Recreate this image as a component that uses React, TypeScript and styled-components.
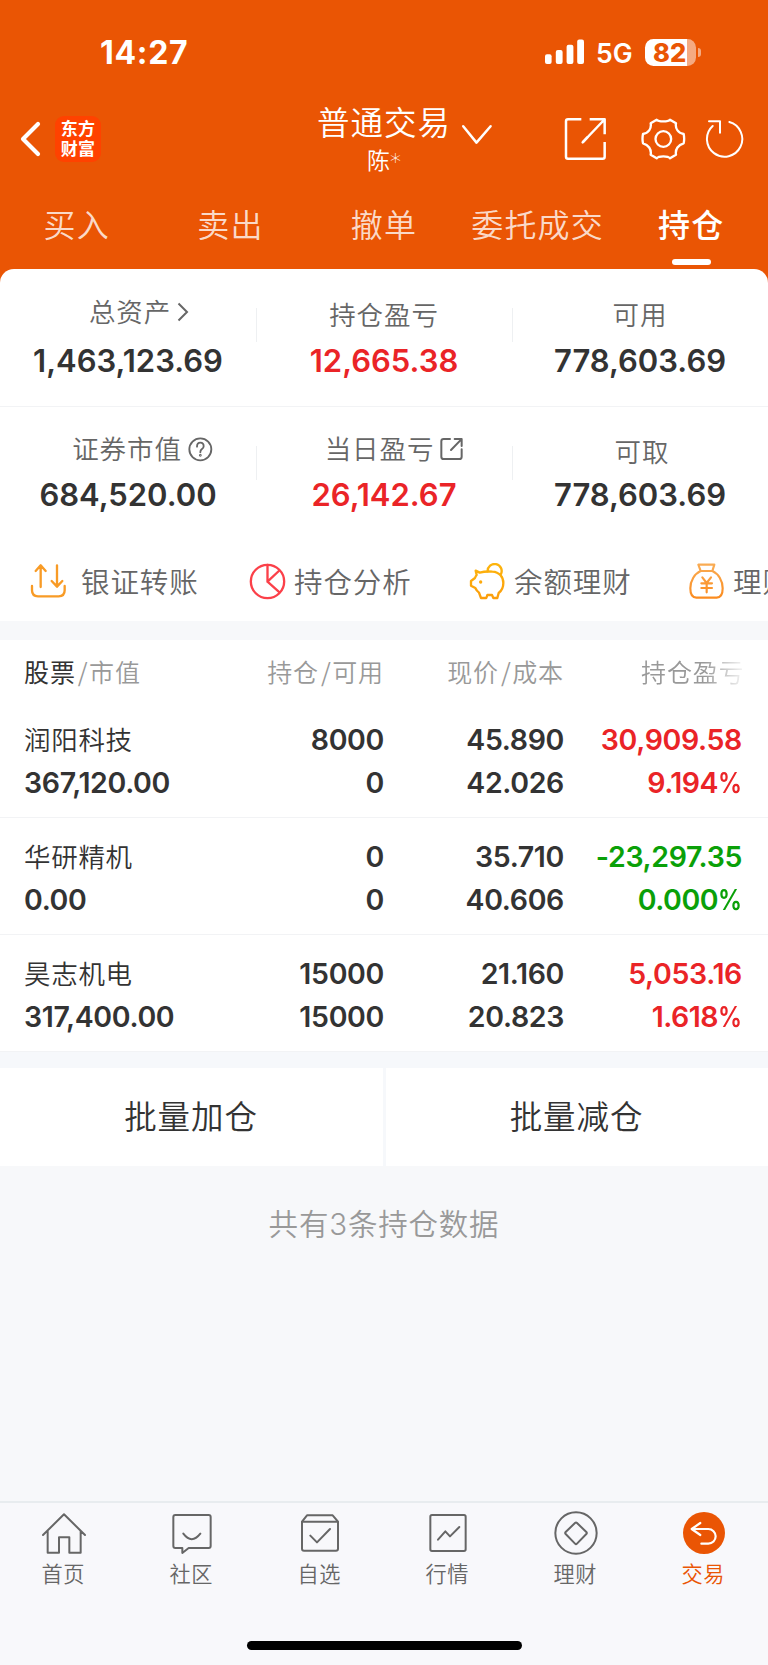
import React from 'react';
import styled, { createGlobalStyle } from 'styled-components';

const orange = '#ea5504';
const red = '#ea2427';
const green = '#0aa008';
const ink = '#333333';
const gray = '#666666';
const pale = '#f6f8fb';
const numeric = `Inter, 'Noto Sans CJK SC', sans-serif`;
const chinese = `'Noto Sans CJK SC', sans-serif`;

const GlobalStyle = createGlobalStyle`
  * { box-sizing: border-box; }
  body {
    margin: 0;
    background: #f7f8fa;
    color: ${ink};
    font-family: ${chinese};
    font-weight: 350;
    -webkit-font-smoothing: antialiased;
  }
  svg { display: block; flex: none; }
`;

const Screen = styled.div`
  width: 768px;
  height: 1665px;
  display: flex;
  flex-direction: column;
  overflow: hidden;
`;

const Header = styled.header`
  height: 290px;
  flex: none;
  background: ${orange};
  color: #fff;
`;

const StatusBar = styled.div`
  height: 104px;
  padding: 0 67px 0 100px;
  display: flex;
  align-items: center;
  font-family: ${numeric};
`;

const Clock = styled.div`
  font-size: 32px;
  font-weight: 700;
  letter-spacing: 0.7px;
  flex: 1;
`;

const Network = styled.div`
  font-size: 26.5px;
  font-weight: 600;
  letter-spacing: 0;
  width: 36px;
  margin: 1px 13px 0 12px;
`;

const Battery = styled.div`
  width: 51px;
  height: 27px;
  border-radius: 8.5px;
  background: linear-gradient(to right, #fff 42px, rgba(255, 255, 255, 0.5) 42px);
  color: ${orange};
  font-size: 25.5px;
  font-weight: 800;
  line-height: 27px;
  padding-left: 8px;
  letter-spacing: 0;
`;

const BatteryNub = styled.div`
  width: 3px;
  height: 9px;
  margin-left: 2px;
  border-radius: 0 4px 4px 0;
  background: rgba(255, 255, 255, 0.5);
`;

const NavBar = styled.div`
  height: 76px;
  display: grid;
  grid-template-columns: 318px 132px 1fr;
`;

const NavLeft = styled.div`
  display: flex;
  align-items: center;
  padding: 0 0 8px 20px;
  gap: 14px;
`;

const Logo = styled.div`
  width: 46px;
  height: 46px;
  border-radius: 9px;
  background: #ff4200;
  font-size: 17px;
  font-weight: 700;
  line-height: 19.5px;
  letter-spacing: 0.3px;
  text-align: center;
  padding-top: 2.5px;
`;

const NavTitle = styled.div`
  display: flex;
  flex-direction: column;
  align-items: center;
  white-space: nowrap;
`;

const Title = styled.div`
  font-size: 32.5px;
  letter-spacing: 1px;
  line-height: 38px;
  margin-top: -2px;
`;

const Account = styled.div`
  display: flex;
  font-size: 23px;
  line-height: 38px;
`;

const Mask = styled.span`
  font-family: 'DejaVu Sans', sans-serif;
  font-size: 22px;
  padding-top: 3px;
`;

const NavRight = styled.div`
  display: flex;
  align-items: center;
  padding: 0 0 8px 11px;
`;

const Tabs = styled.nav`
  display: grid;
  grid-template-columns: repeat(5, 1fr);
  height: 89px;
`;

const Tab = styled.div<{ $active?: boolean }>`
  display: flex;
  flex-direction: column;
  align-items: center;
  padding-top: 20px;
  font-size: 32px;
  line-height: 46px;
  letter-spacing: 1.2px;
  white-space: nowrap;
  font-weight: ${p => (p.$active ? 500 : 350)};
  color: ${p => (p.$active ? '#fff' : 'rgba(255,255,255,0.8)')};
  &::after {
    content: '';
    display: ${p => (p.$active ? 'block' : 'none')};
    width: 39px;
    height: 6px;
    margin-top: 13px;
    border-radius: 3px;
    background: #fff;
  }
`;

const Summary = styled.section`
  flex: none;
  height: 352px;
  margin-top: -21px;
  border-radius: 14px 14px 0 0;
  background: #fff;
`;

const SummaryRow = styled.div<{ $first?: boolean }>`
  height: ${p => (p.$first ? 138 : 134)}px;
  padding-top: ${p => (p.$first ? 22 : 21)}px;
  display: grid;
  grid-template-columns: repeat(3, 1fr);
  border-bottom: ${p => (p.$first ? '1px solid #f2f3f5' : 'none')};
  background:
    linear-gradient(#eef0f2, #eef0f2) 256px 38.5px / 1px 34px no-repeat,
    linear-gradient(#eef0f2, #eef0f2) 512px 38.5px / 1px 34px no-repeat;
`;

const Metric = styled.div`
  display: flex;
  flex-direction: column;
  align-items: center;
`;

const MetricLabel = styled.div<{ $raised?: boolean; $shift?: number }>`
  display: flex;
  align-items: center;
  height: 42px;
  padding-top: ${p => (p.$raised ? 0 : 4)}px;
  padding-bottom: ${p => (p.$raised ? 2 : 0)}px;
  padding-left: ${p => p.$shift || 0}px;
  color: ${gray};
  font-size: 26.5px;
  letter-spacing: 0.9px;
  line-height: 38px;
  white-space: nowrap;
`;

const LabelIcon = styled.span`
  margin: 2px 0 0 6px;
`;

const MetricValue = styled.div<{ $color?: string; $top?: number }>`
  height: 50px;
  margin-top: ${p => p.$top || 0}px;
  line-height: 50px;
  font-family: ${numeric};
  font-size: 31px;
  font-weight: 600;
  color: ${p => p.$color || ink};
`;

const Shortcuts = styled.div`
  height: 80px;
  display: flex;
  overflow: hidden;
  padding-left: 30px;
`;

const Shortcut = styled.div<{ $gap: number; $width: number }>`
  flex: none;
  width: ${p => p.$width}px;
  height: 80px;
  display: flex;
  align-items: center;
  gap: ${p => p.$gap}px;
  font-size: 28.5px;
  letter-spacing: 0.9px;
  color: ${gray};
  white-space: nowrap;
  span { margin-top: -2px; }
`;

const Holdings = styled.section`
  flex: none;
  margin-top: 19px;
  background: #fff;
`;

const HoldingGrid = styled.div`
  display: grid;
  grid-template-columns: 200px 160px 180px 178px;
  padding-left: 24px;
`;

const HeadRow = styled(HoldingGrid)`
  height: 61px;
  align-items: center;
  font-size: 25px;
  letter-spacing: 0.9px;
  color: #999;
  white-space: nowrap;
`;

const HeadCell = styled.div<{ $align?: string }>`
  text-align: ${p => p.$align || 'right'};
  b { font-weight: 400; color: ${ink}; }
  i { font-style: normal; margin: 0 0.5px 0 2px; }
`;

const FadedHead = styled(HeadCell)`
  text-align: left;
  padding-left: 77px;
  mask-image: linear-gradient(to right, #000 140px, transparent 184px);
`;

const HoldingRow = styled(HoldingGrid)`
  height: 117px;
  padding-top: 16.5px;
  border-bottom: 1px solid #f2f3f5;
`;

const Cell = styled.div<{ $align?: string; $color?: string }>`
  text-align: ${p => p.$align || 'right'};
  color: ${p => p.$color || ink};
  font-family: ${numeric};
  font-size: 28.5px;
  font-weight: 600;
  line-height: 43px;
  letter-spacing: -0.35px;
  white-space: nowrap;
`;

const Line = styled.div`
  height: 43px;
`;

const Percent = styled(Line)`
  letter-spacing: -0.5px;
  span {
    display: inline-block;
    width: 24px;
    transform: scaleX(0.84);
    transform-origin: left;
  }
`;

const StockName = styled(Line)`
  font-family: ${chinese};
  font-size: 26.5px;
  font-weight: 350;
  line-height: 41px;
  letter-spacing: 0.7px;
`;

const Actions = styled.div`
  flex: none;
  display: grid;
  grid-template-columns: 383px 1fr;
  gap: 3px;
  padding: 16px 0 0;
  background: ${pale};
`;

const ActionButton = styled.button`
  height: 98px;
  border: 0;
  padding: 0 1px 5px 0;
  background: #fff;
  color: ${ink};
  font: inherit;
  font-size: 32.5px;
  letter-spacing: 0.9px;
`;

const Footnote = styled.div`
  flex: 1;
  background: #f7f8fa;
  text-align: center;
  padding-top: 34.5px;
  font-family: ${numeric};
  font-size: 29.5px;
  line-height: 46px;
  letter-spacing: 0.8px;
  color: #999;
`;

const BottomBar = styled.nav`
  flex: none;
  height: 164px;
  background: #f8f8fb;
  border-top: 2px solid #e8ecef;
  display: flex;
  flex-direction: column;
  align-items: center;
`;

const BottomItems = styled.div`
  width: 768px;
  display: grid;
  grid-template-columns: repeat(6, 1fr);
`;

const BottomItem = styled.div<{ $active?: boolean }>`
  height: 138px;
  display: flex;
  flex-direction: column;
  align-items: center;
  padding-top: 8px;
  font-size: 21.2px;
  line-height: 32px;
  letter-spacing: 0.5px;
  color: ${p => (p.$active ? orange : gray)};
  svg { margin-bottom: 1.5px; }
  span { padding-right: 1.5px; }
`;

const HomeIndicator = styled.div`
  width: 275px;
  height: 9px;
  border-radius: 5px;
  background: #000;
`;

type IconProps = { box: string; w: number; h: number; color?: string; stroke?: number; children: React.ReactNode };
const Icon = ({ box, w, h, color = 'currentColor', stroke = 2, children }: IconProps) => (
  <svg width={w} height={h} viewBox={box} fill="none" stroke={color} strokeWidth={stroke} strokeLinecap="round" strokeLinejoin="round">
    {children}
  </svg>
);

const SignalBars = () => (
  <svg width="39" height="26" viewBox="0 0 39 26" fill="#fff">
    <rect x="0" y="15.2" width="6.6" height="9.8" rx="2" />
    <rect x="10.8" y="11" width="6.8" height="14" rx="2" />
    <rect x="21.6" y="5.8" width="6.8" height="19.2" rx="2" />
    <rect x="32.2" y="0.4" width="6.8" height="24.6" rx="2" />
  </svg>
);

const BackIcon = () => (
  <Icon box="0 0 21 36" w={21} h={36} stroke={4.2}><path d="M18 3 3 18l15 15" /></Icon>
);
const ChevronDown = () => (
  <Icon box="0 0 32 22" w={32} h={22} stroke={2.5}><path d="m2.2 2.2 13.3 16.4L29.600 2.2" /></Icon>
);
const ShareIcon = () => (
  <Icon box="540 350 129 132" w={43} h={44} stroke={7.5}>
    <path d="M592 357h-40q-6 0-6 6v106q0 6 6 6h104q6 0 6-6v-44M617 357h45v45M660 359l-63 66" strokeLinecap="butt" />
    <path d="m596 426 14-15" />
  </Icon>
);
const GearIcon = () => (
  <Icon box="15 18 135 132" w={45} h={44} stroke={7}>
    <circle cx="82" cy="84" r="23.500" />
    <path d="M62 26C68 33 96 33 102 26L120 37C117 53 127 67 143 69Q146 83 143 97C127 101 117 115 120 131L102 142C96 134 68 134 62 142L44 131C47 115 37 101 21 97Q18 83 21 69C37 67 47 53 44 37Z" />
  </Icon>
);
const RefreshIcon = () => (
  <Icon box="963 354 120 120" w={40} h={40} stroke={6}>
    <path d="M1036 363a53 53 0 1 1-50 12M975 361h33v34" />
  </Icon>
);

const TransferIcon = () => (
  <Icon box="90 70 111 111" w={37} h={37} color="#f89b26" stroke={7}>
    <path d="M96 139v13q0 18 18 18h62q18 0 18-18v-13M122 142V77l-15 17M122 77l15 17M171 77v64l-16-17M171 141l16-17" />
  </Icon>
);
const AnalysisIcon = () => (
  <Icon box="748 70 111 111" w={37} h={37} color="#fb4049" stroke={7}>
    <circle cx="803.500" cy="125.500" r="50" />
    <path d="M803.500 76v50l34-32M803.500 126l36 32" />
  </Icon>
);
const PiggyIcon = () => (
  <Icon box="254 70 111 111" w={37} h={37} color="url(#pig)" stroke={7}>
    <defs><linearGradient id="pig" gradientUnits="userSpaceOnUse" x1="300" y1="70" x2="300" y2="180"><stop stopColor="#fdb50c" /><stop offset="1" stopColor="#fb9d0c" /></linearGradient></defs>
    <path d="M274 93L286 99Q304 94 324 96C346 97 357 113 357 130C357 144 351 154 343 160L339 175H327L323 166H309L306 175H290L284 159Q277 154 273 145L260 138V124L272 115Q274 109 277 106Z" />
    <path d="M310 95a21 21 0 1 1 40 8" />
    <circle cx="289" cy="127" r="5" fill="#fda90c" stroke="none" />
  </Icon>
);
const MoneyBagIcon = () => (
  <Icon box="911 70 111 111" w={37} h={37} color="url(#bag)" stroke={6.500}>
    <defs><linearGradient id="bag" gradientUnits="userSpaceOnUse" x1="960" y1="70" x2="960" y2="180"><stop stopColor="#f9ad56" /><stop offset="1" stopColor="#fb8a1c" /></linearGradient></defs>
    <path d="M942 75h48l-6 19h-35Z M949 94c-18 8-31 29-31 52 0 17 6 28 18 28h61c12 0 18-11 18-28 0-23-13-44-31-52" />
    <path d="m954 113 13 17 13-17M967 130v28M951 131h32M951 145h32" />
  </Icon>
);

const HomeIcon = () => (
  <Icon box="127 62 132 132" w={44} h={44} stroke={6}>
    <path d="m130 134 63-62 63 62M144 123v64h34v-46h31v46h34v-64" />
  </Icon>
);
const CommunityIcon = () => (
  <Icon box="511 62 132 132" w={44} h={44} stroke={6}>
    <path d="M527 74h100q6 0 6 6v87q0 6-6 6h-60l-19 15v-15h-21q-6 0-6-6V80q0-6 6-6ZM551 130q25 33 51 0" />
  </Icon>
);
const WatchlistIcon = () => (
  <Icon box="894 62 132 132" w={44} h={44} stroke={6}>
    <path d="M906 94h108v81q0 6-6 6h-96q-6 0-6-6ZM906 94l15-19h77l16 19M931 136l20 20 39-40" />
  </Icon>
);
const MarketIcon = () => (
  <Icon box="126 62 132 132" w={44} h={44} stroke={6}>
    <rect x="139" y="74" width="106" height="108" rx="5" />
    <path d="m162 148 22-25 14 15 28-28" />
  </Icon>
);
const WealthIcon = () => (
  <Icon box="510 62 132 132" w={44} h={44} stroke={6}>
    <circle cx="576" cy="128" r="62" />
    <path d="M573 98q3-3 6 0l28 27q3 3 0 6l-28 29q-3 3-6 0l-28-29q-3-3 0-6Z" />
  </Icon>
);
const TradeIcon = () => (
  <Icon box="894 62 132 132" w={44} h={44} color="#fff" stroke={6.500}>
    <circle cx="960" cy="128" r="63" fill={orange} stroke="none" />
    <path d="m949 98-26 18 26 18M925 116h48a22 22 0 0 1 0 44h-21" />
  </Icon>
);

const ChevronRight = () => (
  <svg width="12" height="20" viewBox="0 0 12 20" fill="none" stroke={gray} strokeWidth="2"><path d="m1.500 1.500 8.500 8.500-8.500 8.500" /></svg>
);
const HelpIcon = () => (
  <Icon box="565 502 75 75" w={25} h={25} stroke={5.500}>
    <circle cx="602" cy="539" r="33" />
    <path d="M592 531q0-12 10-12t10 11q0 6-6 9-4 3-4 9" />
    <circle cx="602" cy="557" r="1.500" />
  </Icon>
);
const SmallShareIcon = () => (
  <Icon box="172 503 72 72" w={24} h={24} stroke={6}>
    <path d="M202 509h-19q-7 0-7 7v46q0 7 7 7h47q7 0 7-7v-22M216 509h21v21M236 510l-31 32" />
  </Icon>
);

const IconSlot = styled.span<{ $left: number }>`
  margin-left: ${p => p.$left}px;
`;

const ChevronSlot = styled.span`
  margin-bottom: 8px;
`;

const bottomItems = [
  { label: '首页', icon: <HomeIcon /> },
  { label: '社区', icon: <CommunityIcon /> },
  { label: '自选', icon: <WatchlistIcon /> },
  { label: '行情', icon: <MarketIcon /> },
  { label: '理财', icon: <WealthIcon /> },
  { label: '交易', icon: <TradeIcon />, active: true },
];

const holdings = [
  { name: '润阳科技', value: '367,120.00', qty: '8000', free: '0', price: '45.890', cost: '42.026', profit: '30,909.58', rate: '9.194', color: red },
  { name: '华研精机', value: '0.00', qty: '0', free: '0', price: '35.710', cost: '40.606', profit: '-23,297.35', rate: '0.000', color: green },
  { name: '昊志机电', value: '317,400.00', qty: '15000', free: '15000', price: '21.160', cost: '20.823', profit: '5,053.16', rate: '1.618', color: red },
];

export default function App() {
  return (
    <Screen>
      <GlobalStyle />
      <Header>
        <StatusBar>
          <Clock>14:27</Clock>
          <SignalBars />
          <Network>5G</Network>
          <Battery>82</Battery>
          <BatteryNub />
        </StatusBar>
        <NavBar>
          <NavLeft>
            <BackIcon />
            <Logo>东方<br />财富</Logo>
          </NavLeft>
          <NavTitle>
            <Title>普通交易</Title>
            <Account>陈<Mask>*</Mask></Account>
          </NavTitle>
          <NavRight>
            <ChevronSlot><ChevronDown /></ChevronSlot>
            <IconSlot $left={71}><ShareIcon /></IconSlot>
            <IconSlot $left={34}><GearIcon /></IconSlot>
            <IconSlot $left={19}><RefreshIcon /></IconSlot>
          </NavRight>
        </NavBar>
        <Tabs>
          <Tab>买入</Tab>
          <Tab>卖出</Tab>
          <Tab>撤单</Tab>
          <Tab>委托成交</Tab>
          <Tab $active>持仓</Tab>
        </Tabs>
      </Header>

      <Summary>
        <SummaryRow $first>
          <Metric>
            <MetricLabel $raised $shift={22}>总资产<LabelIcon><ChevronRight /></LabelIcon></MetricLabel>
            <MetricValue $top={3}>1,463,123.69</MetricValue>
          </Metric>
          <Metric>
            <MetricLabel>持仓盈亏</MetricLabel>
            <MetricValue $top={3} $color={red}>12,665.38</MetricValue>
          </Metric>
          <Metric>
            <MetricLabel>可用</MetricLabel>
            <MetricValue $top={3}>778,603.69</MetricValue>
          </Metric>
        </SummaryRow>
        <SummaryRow>
          <Metric>
            <MetricLabel $raised $shift={29}>证券市值<LabelIcon><HelpIcon /></LabelIcon></MetricLabel>
            <MetricValue>684,520.00</MetricValue>
          </Metric>
          <Metric>
            <MetricLabel $raised $shift={21}>当日盈亏<LabelIcon><SmallShareIcon /></LabelIcon></MetricLabel>
            <MetricValue $color={red}>26,142.67</MetricValue>
          </Metric>
          <Metric>
            <MetricLabel $shift={4}>可取</MetricLabel>
            <MetricValue>778,603.69</MetricValue>
          </Metric>
        </SummaryRow>
        <Shortcuts>
          <Shortcut $gap={14} $width={219}><TransferIcon /><span>银证转账</span></Shortcut>
          <Shortcut $gap={8} $width={220}><AnalysisIcon /><span>持仓分析</span></Shortcut>
          <Shortcut $gap={8} $width={219}><PiggyIcon /><span>余额理财</span></Shortcut>
          <Shortcut $gap={8} $width={219}><MoneyBagIcon /><span>理财</span></Shortcut>
        </Shortcuts>
      </Summary>

      <Holdings>
        <HeadRow>
          <HeadCell $align="left"><b>股票</b><i>/</i>市值</HeadCell>
          <HeadCell>持仓<i>/</i>可用</HeadCell>
          <HeadCell>现价<i>/</i>成本</HeadCell>
          <FadedHead>持仓盈亏</FadedHead>
        </HeadRow>
        {holdings.map(h => (
          <HoldingRow key={h.name}>
            <Cell $align="left"><StockName>{h.name}</StockName><Line>{h.value}</Line></Cell>
            <Cell><Line>{h.qty}</Line><Line>{h.free}</Line></Cell>
            <Cell><Line>{h.price}</Line><Line>{h.cost}</Line></Cell>
            <Cell $color={h.color}><Line>{h.profit}</Line><Percent>{h.rate}<span>%</span></Percent></Cell>
          </HoldingRow>
        ))}
      </Holdings>

      <Actions>
        <ActionButton>批量加仓</ActionButton>
        <ActionButton>批量减仓</ActionButton>
      </Actions>
      <Footnote>共有3条持仓数据</Footnote>

      <BottomBar>
        <BottomItems>
          {bottomItems.map(item => (
            <BottomItem key={item.label} $active={item.active}>{item.icon}<span>{item.label}</span></BottomItem>
          ))}
        </BottomItems>
        <HomeIndicator />
      </BottomBar>
    </Screen>
  );
}
